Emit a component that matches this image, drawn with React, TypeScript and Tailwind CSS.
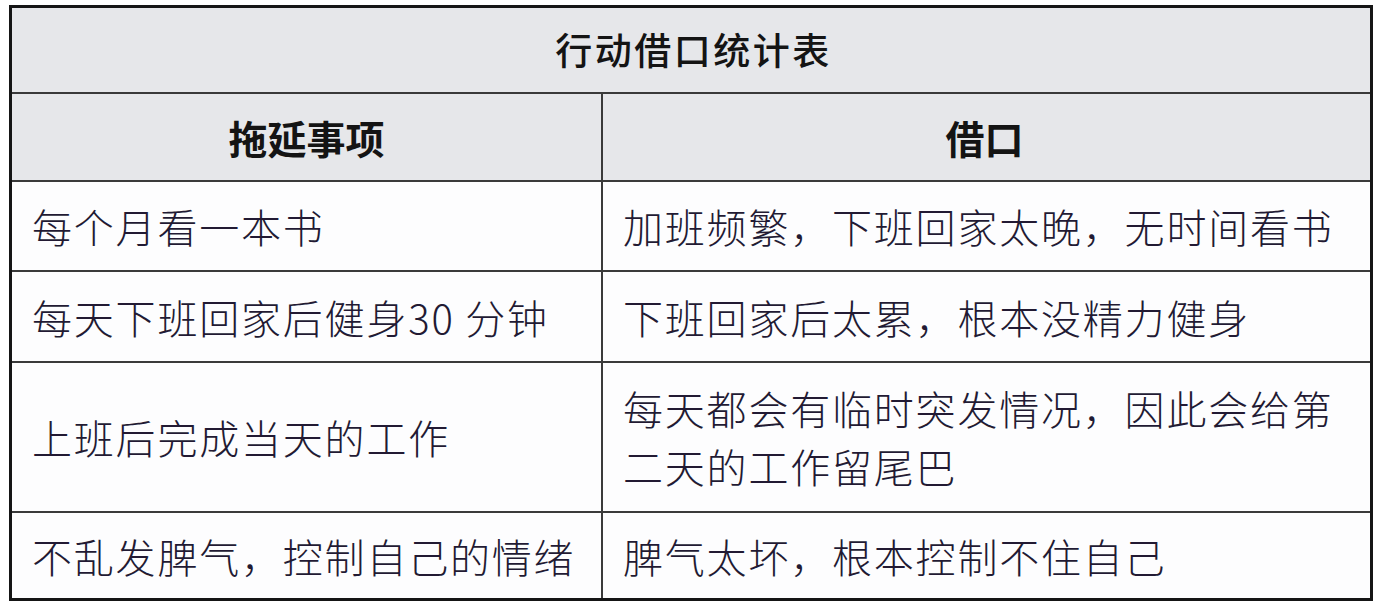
const rows: { task: string; excuse: string[]; h: string }[] = [
  { task: "每个月看一本书", excuse: ["加班频繁，下班回家太晚，无时间看书"], h: "h-[90px]" },
  { task: "每天下班回家后健身30 分钟", excuse: ["下班回家后太累，根本没精力健身"], h: "h-[91px]" },
  {
    task: "上班后完成当天的工作",
    excuse: ["每天都会有临时突发情况，因此会给第", "二天的工作留尾巴"],
    h: "h-[150px]",
  },
  { task: "不乱发脾气，控制自己的情绪", excuse: ["脾气太坏，根本控制不住自己"], h: "h-[85px]" },
];

export default function App() {
  return (
    <div
      className="w-[1386px] h-[612px] bg-white pt-[5px] pl-[9px]"
      style={{ fontFamily: '"Noto Sans CJK SC", "Noto Sans", sans-serif' }}
    >
      <div className="w-[1364px] border-[3px] border-[#151515]">
        {/* title */}
        <div className="h-[86px] bg-[#e6e7ea] border-b-2 border-[#3a3a3a] flex items-center justify-center">
          <span className="text-[37px] tracking-[2.5px] font-medium text-[#141414] pl-[5px]">行动借口统计表</span>
        </div>

        {/* header */}
        <div className="grid grid-cols-[589px_1fr] h-[88px] bg-[#e6e7ea] border-b-2 border-[#3a3a3a]">
          <div className="flex items-center justify-center">
            <span className="text-[39px] font-bold text-[#141414]">拖延事项</span>
          </div>
          <div className="flex items-center justify-center border-l-2 border-[#3a3a3a]">
            <span className="text-[39px] font-bold text-[#141414] pr-[4px]">借口</span>
          </div>
        </div>

        {rows.map((r, i) => (
          <div
            key={i}
            className={`grid grid-cols-[589px_1fr] ${r.h} bg-[#fdfdfe] ${
              i < rows.length - 1 ? "border-b-2 border-[#3a3a3a]" : ""
            }`}
          >
            <div className="flex items-center pl-[20px]">
              <span className="text-[40px] font-light tracking-[1.8px] text-[#221a33] leading-none whitespace-nowrap">
                {r.task}
              </span>
            </div>
            <div className="flex flex-col justify-center border-l-2 border-[#3a3a3a] pl-[20px]">
              {r.excuse.map((line, j) => (
                <span
                  key={j}
                  className="text-[40px] font-light tracking-[1.8px] text-[#221a33] leading-[58px] whitespace-nowrap"
                >
                  {line}
                </span>
              ))}
            </div>
          </div>
        ))}
      </div>
    </div>
  );
}
